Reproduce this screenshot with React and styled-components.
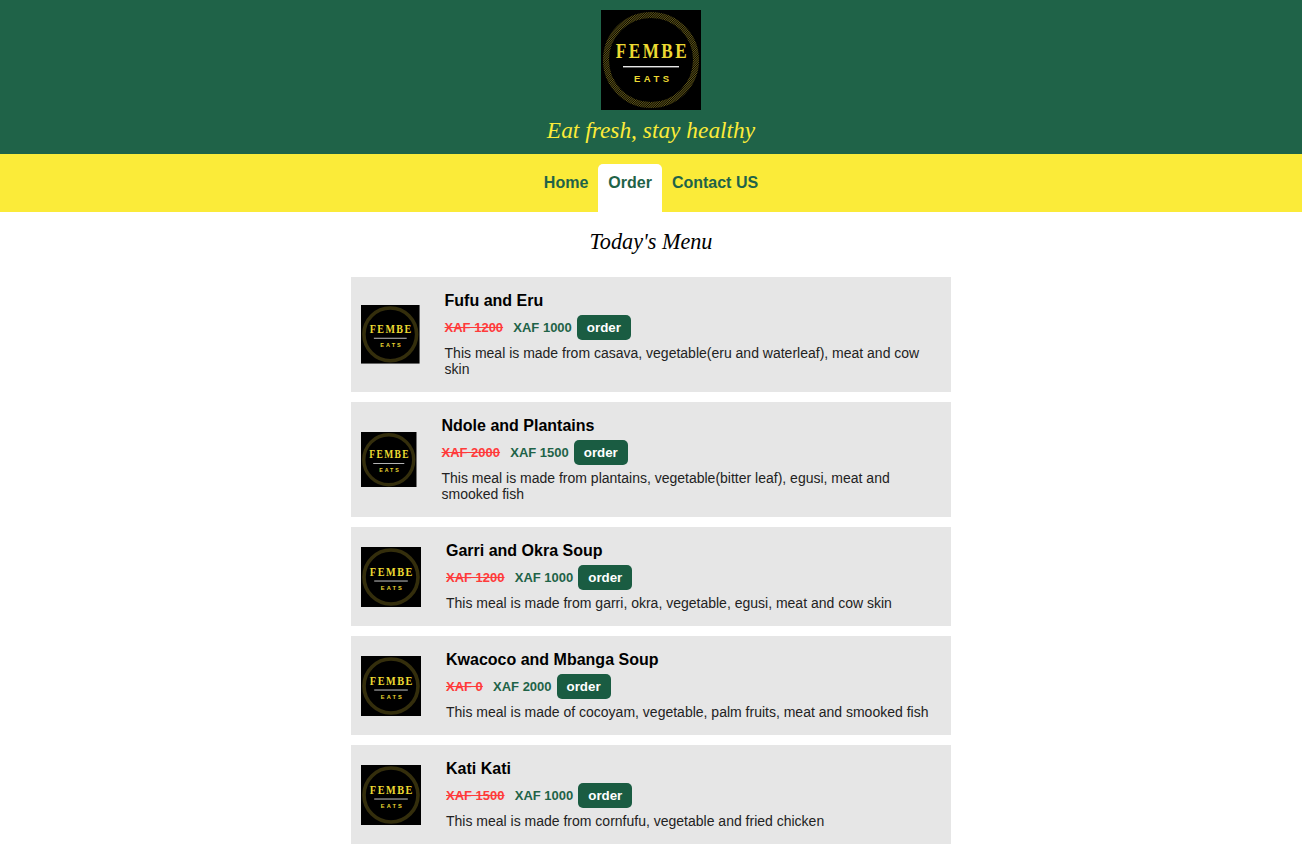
import React from "react";
import styled, { createGlobalStyle } from "styled-components";

const Global = createGlobalStyle`
  html, body { margin: 0; padding: 0; background: #fff; }
  body { font-family: "Liberation Sans", Arial, sans-serif; color: #000; }
`;
const Header = styled.header`
  background: #1f6348; height: 154px; box-sizing: border-box; padding-top: 10px;
  display: flex; flex-direction: column; align-items: center;
`;
const LogoBox = styled.div`width: 100px; height: 100px; display: flex;`;
const Tagline = styled.h1`
  margin: 5px 0 0; font: italic 400 23.4px/30px cursive; color: #fbeb39;
`;
const Nav = styled.nav`
  background: #fbeb39; height: 58px; box-sizing: border-box; padding-top: 10px;
  display: flex; justify-content: center;
`;
const Tab = styled.a`
  padding: 10px; font-size: 16px; line-height: 18px; font-weight: 700; color: #1f6348;
  border-radius: 5px 5px 0 0; background: ${p => (p.$active ? "#fff" : "transparent")};
`;
const Heading = styled.h2`
  margin: 0; padding-top: 15px; height: 50px; box-sizing: content-box; text-align: center;
  font: italic 400 22.2px/30px cursive; color: #000;
`;
const List = styled.main`
  width: 600px; margin: 0 auto; display: flex; flex-direction: column; gap: 10px; padding-bottom: 10px;
`;
const Card = styled.article`
  background: #e6e6e6; padding: 10px; display: flex; align-items: center;
`;
const Thumb = styled.div`width: 60px; min-width: 0; display: flex; margin-right: 20px;`;
const Body = styled.div`padding: 5px; min-width: 0; flex: 0 1 max-content;`;
const Title = styled.h3`margin: 0; font-size: 16px; line-height: 18px; font-weight: 700;`;
const Prices = styled.div`
  margin: 5px 0; display: flex; align-items: center; font-size: 13px; font-weight: 700;
`;
const OldPrice = styled.span`color: #ff3b3b; text-decoration: line-through; margin-right: 10.2px;`;
const NewPrice = styled.span`color: #1f6348; margin-right: 5px;`;
const OrderButton = styled.button`
  border: 0; height: 25px; width: 54px; padding: 0; border-radius: 5px; background: #1a5c42; color: #fff;
  font: 700 13.333px "Liberation Sans", Arial, sans-serif;
`;
const Desc = styled.p`margin: 0; font-size: 14px; line-height: 16px; color: #222;`;

function Logo({ id }) {
  return (
    <svg viewBox="0 0 100 100" width="100%" style={{ display: "block", aspectRatio: "1" }}>
      <defs>
        <pattern id={id} width="1.6" height="1.6" patternUnits="userSpaceOnUse" patternTransform="rotate(45)">
          <rect width="0.6" height="1.6" fill="#8a7a20" />
        </pattern>
      </defs>
      <rect width="100" height="100" fill="#000" />
      <circle cx="50" cy="50" r="45" fill="none" stroke={`url(#${id})`} strokeWidth="6" />
      <text transform="translate(51.5 47.5) scale(0.78 1)" textAnchor="middle" fontFamily="Liberation Serif, serif" fontWeight="700" fontSize="22" letterSpacing="3.2" fill="#ecd932">FEMBE</text>
      <rect x="22" y="56" width="56" height="1.4" fill="#e8e8e8" />
      <text x="50.5" y="72" textAnchor="middle" fontFamily="Liberation Sans, sans-serif" fontWeight="700" fontSize="9.5" textLength="35" fill="#ecd932">EATS</text>
    </svg>
  );
}

const meals = [
  ["Fufu and Eru", "XAF 1200", "XAF 1000", "This meal is made from casava, vegetable(eru and waterleaf), meat and cow skin"],
  ["Ndole and Plantains", "XAF 2000", "XAF 1500", "This meal is made from plantains, vegetable(bitter leaf), egusi, meat and smooked fish"],
  ["Garri and Okra Soup", "XAF 1200", "XAF 1000", "This meal is made from garri, okra, vegetable, egusi, meat and cow skin"],
  ["Kwacoco and Mbanga Soup", "XAF 0", "XAF 2000", "This meal is made of cocoyam, vegetable, palm fruits, meat and smooked fish"],
  ["Kati Kati", "XAF 1500", "XAF 1000", "This meal is made from cornfufu, vegetable and fried chicken"],
];

export default function App() {
  return (
    <>
      <Global />
      <Header>
        <LogoBox><Logo id="hatch-top" /></LogoBox>
        <Tagline>Eat fresh, stay healthy</Tagline>
      </Header>
      <Nav>
        <Tab>Home</Tab>
        <Tab $active>Order</Tab>
        <Tab>Contact US</Tab>
      </Nav>
      <Heading>Today's Menu</Heading>
      <List>
        {meals.map(([t, o, n, d], i) => (
          <Card key={t}>
            <Thumb><Logo id={`hatch-${i}`} /></Thumb>
            <Body>
              <Title>{t}</Title>
              <Prices>
                <OldPrice>{o}</OldPrice>
                <NewPrice>{n}</NewPrice>
                <OrderButton>order</OrderButton>
              </Prices>
              <Desc>{d}</Desc>
            </Body>
          </Card>
        ))}
      </List>
    </>
  );
}
